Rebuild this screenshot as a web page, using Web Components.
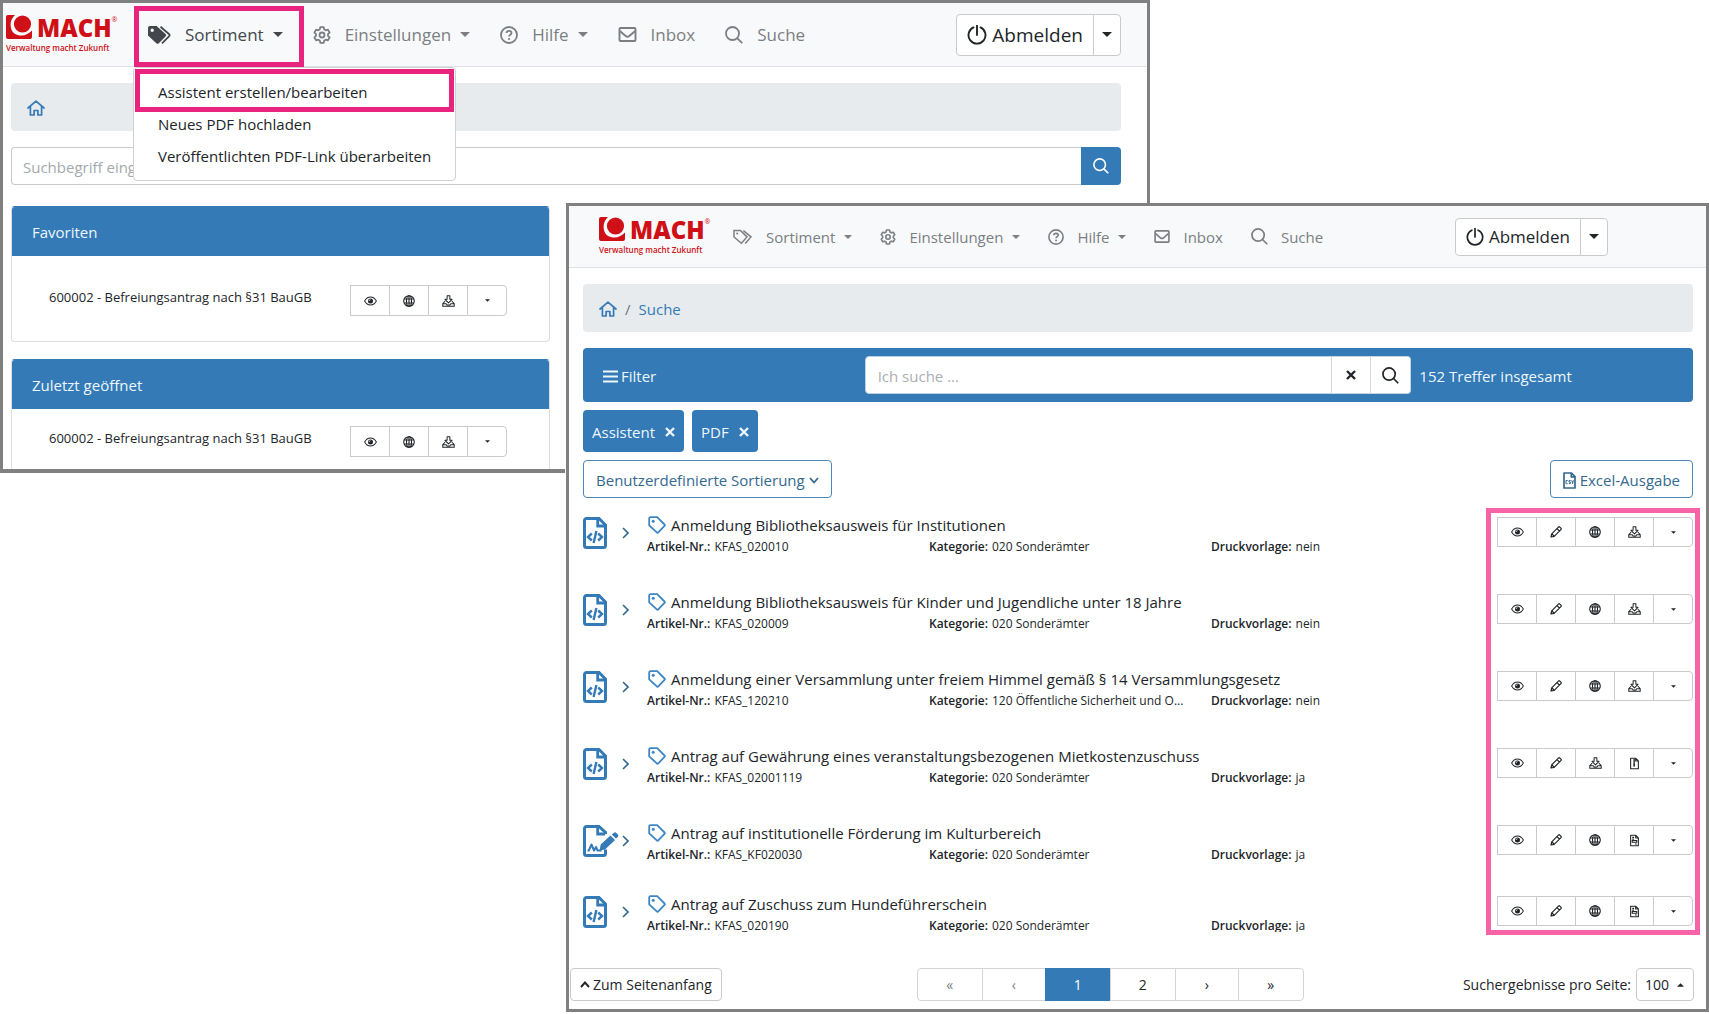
<!DOCTYPE html>
<html lang="de">
<head>
<meta charset="utf-8">
<title>MACH Formularsortiment</title>
<style>
  body { margin: 0; background: #fff; color: #212529; font: 15px/24px "Open Sans", "Noto Sans", sans-serif; }
  mach-desktop { --blue: #337ab7; --line: #c8cacc; --pink: #e8247f; --rose: #f763a6; }
</style>
</head>
<body>
<mach-desktop></mach-desktop>

<script>
const ICONS = {
  tags: ['0 0 20 16', '<path d="M1 1.5h6.4l6.6 6.4-5.6 6.4L1 8z"/><path d="M10.4 1.6l7.6 6.3-5.8 6.6"/><circle cx="4.2" cy="4.6" r="1" fill="currentColor" stroke="none"/>', 1.5],
  tagsFill: ['0 0 23 18', '<path d="M0 2a2 2 0 0 1 2-2h6.6l8.9 8a1.6 1.6 0 0 1 0 2.400l-6.700 6.800a1.800 1.800 0 0 1-2.500 0L0 9.500zM4.200 2.600a1.700 1.700 0 1 0 0 3.400 1.700 1.700 0 0 0 0-3.400z" fill="currentColor" fill-rule="evenodd" stroke="none"/><path d="M12.500.8l8.700 7.500a1.200 1.200 0 0 1 0 1.800L14 17.300"/>', 1.8],
  tag: ['0 0 18 18', '<path d="M1.200 2.400A1.200 1.200 0 0 1 2.400 1.200h6.800l7.300 7.300a1 1 0 0 1 0 1.400l-6.200 6.500a1 1 0 0 1-1.500 0L1.200 9.400z"/><circle cx="5.200" cy="5.200" r="1.500" fill="currentColor" stroke="none"/>', 1.8],
  gear: ['0 0 18 18', '<path d="M7.300 1.200h3.400l.5 2.200 1.600.9 2.100-.7 1.700 2.900-1.600 1.600v1.800l1.600 1.600-1.700 2.900-2.100-.7-1.600.9-.5 2.200H7.300l-.5-2.200-1.600-.9-2.100.7-1.700-2.900L3 9.900V8.100L1.400 6.500l1.700-2.900 2.100.7 1.600-.9z" stroke-linejoin="round"/><circle cx="9" cy="9" r="2.500"/>', 1.8],
  help: ['0 0 18 18', '<circle cx="9" cy="9" r="8"/><path d="M6.600 7.100c0-1.400 1-2.200 2.400-2.200s2.500.8 2.500 2.100c0 1.700-2.400 1.600-2.400 3.400"/><circle cx="9.100" cy="13" r="1.100" fill="currentColor" stroke="none"/>', 1.8],
  mail: ['0 0 18 15', '<rect x="1" y="1" width="16" height="13" rx="1"/><path d="M1.300 4l5.900 5a2.800 2.800 0 0 0 3.600 0l5.900-5"/>', 1.9],
  search: ['0 0 18 18', '<circle cx="7.500" cy="7.500" r="6.500"/><path d="M12.200 12.200l5 5"/>', 1.8],
  power: ['0 0 20 20', '<path d="M6.500 2.400a8.500 8.500 0 1 0 7 0M10 .5v9.500" stroke-linecap="round"/>', 1.9],
  home: ['0 0 18 16', '<path d="M1 8l8-6.800L17 8M3.400 6.500V15h3.700v-4.500h3.800V15h3.700V6.500" stroke-linejoin="round" stroke-linecap="round"/>', 1.7],
  caret: ['0 0 10 5', '<path d="M0 0h10L5 5z" fill="currentColor" stroke="none"/>', 0],
  caretUp: ['0 0 10 5', '<path d="M0 5h10L5 0z" fill="currentColor" stroke="none"/>', 0],
  down: ['0 0 10 7', '<path d="M1 1l4 4.500L9 1"/>', 1.8],
  up: ['0 0 10 7', '<path d="M1 6l4-4.500L9 6"/>', 1.9],
  right: ['0 0 7 12', '<path d="M1 1l5 5-5 5"/>', 1.6],
  menu: ['0 0 15 13', '<path d="M0 1.500h15M0 6.500h15M0 11.500h15"/>', 2],
  close: ['0 0 10 10', '<path d="M1 1l8 8M9 1L1 9"/>', 2.400],
  eye: ['0 0 14 10', '<path d="M.7 5C2.300 2 4.500.7 7 .7S11.700 2 13.300 5C11.700 8 9.500 9.300 7 9.300S2.300 8 .7 5z"/><circle cx="7" cy="5" r="2.700" fill="currentColor" stroke="none"/><path d="M5.500 5A1.500 1.500 0 0 1 7 3.500" stroke="#fff" stroke-width=".8"/>', 1.100],
  globe: ['0 0 12 12', '<circle cx="6" cy="6" r="5.300"/><ellipse cx="6" cy="6" rx="2.500" ry="5.300"/><path d="M6 .7v10.600M1.200 4h9.600M1.200 8h9.600"/>', 1.100],
  inbox: ['0 0 14 13', '<path d="M5.500.7h3v4h2.300L7 8.600 3.200 4.700h2.300z" stroke-linejoin="round"/><path d="M3.400 6.500L.8 9.500v2.800h12.400V9.500l-2.600-3M.8 9.500h3.700l1 1.300h3l1-1.300h3.700"/>', 1.100],
  pencil: ['0 0 12 12', '<path d="M1 11l.7-3.200L8.400 1.100a1 1 0 0 1 1.400 0l1.100 1.100a1 1 0 0 1 0 1.400L4.200 10.300zM7 2.600L9.400 5M2 8l2 2" stroke-linejoin="round"/>', 1.200],
  zip: ['0 0 10 13', '<path d="M.7.700h5.800l2.800 2.800v8.800H.7zM6.300.8v2.900h3" stroke-linejoin="round"/><path d="M4.600 1.500v8.500M3.600 8h2" stroke-width="1.500"/>', 1.200],
  invoice: ['0 0 10 13', '<path d="M.7.700h5.800l2.800 2.800v8.800H.7zM6.300.8v2.900h3" stroke-linejoin="round"/><path d="M2.500 3h2M2.500 5h2M2.500 6.500h5v2h-5zM5.500 10.300h2"/>', 1.200],
  csv: ['0 0 13 17', '<path d="M1 1h7.500L12 4.500V16H1zM8.300 1.200v3.600h3.500" stroke-linejoin="round"/><path d="M4.600 8.500H3v3.200h1.600M7.600 8.500H6v1.500h1.400v1.700H5.800M8.800 8.300l.8 3.300.8-3.300" stroke-width="1"/>', 1.700],
  code: ['0 0 24 32', '<path d="M1.500 3.500a2 2 0 0 1 2-2H16l6.500 6.500v20.500a2 2 0 0 1-2 2h-17a2 2 0 0 1-2-2z" stroke-width="3"/><path d="M14.700 2v7h7.500" stroke-width="2.800"/><path d="M8.800 16.500L5 20l3.800 3.500M15.200 16.500L19 20l-3.800 3.500M13.400 14l-2.800 12"/>', 2.400],
  sign: ['0 0 36 32', '<path d="M22.500 9v-1.500L16 1.500H3.500a2 2 0 0 0-2 2v25a2 2 0 0 0 2 2h17a2 2 0 0 0 2-2v-4" stroke-width="3"/><path d="M14.700 2v7h7.500" stroke-width="2.800"/><path d="M4.500 25.500h1.300l2.700-6 2.500 6 2-3.500 1.600 3.500h4" stroke-width="2" stroke-linejoin="round"/><path d="M16.500 25.500l1.200-6L27.500 10.500l4.500 4.500-10 9.500zM28.700 9.500l2-1.600a2 2 0 0 1 2.700 0l1.400 1.500a2 2 0 0 1 0 2.600l-1.900 1.600z" fill="currentColor" stroke="none"/>', 2]
};

class Shadow extends HTMLElement {
  connectedCallback() {
    if (this.shadowRoot) return;
    this.attachShadow({ mode: 'open' }).innerHTML =
      `<style>*{box-sizing:border-box}button,input,select{font:inherit;color:inherit;margin:0}button{cursor:pointer}a{color:inherit;text-decoration:none}${this.css()}</style>${this.html()}`;
  }
  css() { return ''; }
  html() { return '<slot></slot>'; }
  a(name) { return this.getAttribute(name) || ''; }
}
const def = (tag, cls) => customElements.define(tag, cls);
const icon = (name, w, h) => `<ui-icon name="${name}" w="${w}" h="${h}"></ui-icon>`;

def('ui-icon', class extends Shadow {
  css() { return `:host{display:inline-flex;flex:none;width:${this.a('w')}px;height:${this.a('h')}px}svg{display:block;width:100%;height:100%}`; }
  html() {
    const [box, body, stroke] = ICONS[this.a('name')];
    return `<svg viewBox="${box}" fill="none" stroke="currentColor" stroke-width="${stroke}" aria-hidden="true">${body}</svg>`;
  }
});

def('mach-logo', class extends Shadow {
  css() { return `
    :host{display:flex;flex-direction:column;flex:none;width:110px;color:#cf1016}
    .top{display:flex;align-items:flex-start;gap:5px;height:26px}
    svg{flex:none;width:26px;height:24px}
    b{font:800 24px/26px "Open Sans",sans-serif}
    sup{font:7px/10px "Open Sans",sans-serif}
    .word{display:flex}
    small{font:600 8px/13px "Open Sans",sans-serif;white-space:nowrap}`; }
  html() { return `
    <div class="top"><svg viewBox="0 0 26 24" aria-hidden="true"><path d="M0 2Q0 0 2 0h7C5 4 4 8 5 13c1 5 5 7 9 7.500 5 .5 9-2 12-5V22q0 2-2 2H2q-2 0-2-2z" fill="#cf1016"/><circle cx="16.500" cy="9" r="8.600" fill="#cf1016"/></svg>
    <span class="word"><b>MACH</b><sup>®</sup></span></div><small>Verwaltung macht Zukunft</small>`; }
});

def('nav-item', class extends Shadow {
  css() { return `:host{display:flex;position:relative}
    a{display:flex;align-items:center;white-space:nowrap;color:#7c7f82}
    :host([active]) a{color:#43474b}
    .label{margin-left:var(--nav-icon-gap)}
    .caret{margin-left:9px;display:flex}`; }
  html() {
    return `<a href="#">${icon(this.a('icon'), this.a('iw'), this.a('ih'))}<span class="label">${this.a('label')}</span>${this.hasAttribute('menu') ? `<span class="caret">${icon('caret', this.a('cw') || 8, this.a('cw') ? 5 : 4)}</span>` : ''}</a><slot></slot>`;
  }
});

def('drop-menu', class extends Shadow {
  css() { return `:host{display:block;position:absolute;z-index:5;left:-15px;top:44px;padding:8px 0;background:#fff;border:1px solid #cfd1d4;border-radius:4px;color:#212529;font-size:15px}
    a{display:block;padding:4px 24px;white-space:nowrap;line-height:24px}`; }
  html() { return `<a href="#">Assistent erstellen/bearbeiten</a><a href="#">Neues PDF hochladen</a><a href="#">Veröffentlichten PDF-Link überarbeiten</a><slot></slot>`; }
});

def('mark-frame', class extends Shadow {
  css() { return `:host{display:block;position:absolute;z-index:6;pointer-events:none;border:5px solid var(--pink)}`; }
});

def('logout-split', class extends Shadow {
  css() { return `:host{display:flex;margin-left:auto;color:#212529;height:var(--split-h);font-size:var(--split-font)}
    button{background:#fff;border:1px solid var(--line);display:flex;align-items:center;justify-content:center;padding:0 10px;gap:5px}
    .main{border-radius:4px 0 0 4px}.more{border-radius:0 4px 4px 0;margin-left:-1px;padding:0 8px}`; }
  html() { return `<button class="main">${icon('power', this.a('p'), this.a('p'))}Abmelden</button><button class="more" aria-label="Mehr">${icon('caret', 10, 5)}</button>`; }
});

def('nav-bar', class extends Shadow {
  css() { return `:host{display:flex;align-items:center;background:#f8f9fb;border-bottom:1px solid #dfe1e6}`; }
});

def('crumb-bar', class extends Shadow {
  css() { return `:host{display:block}nav{display:flex;align-items:center;gap:8px;height:48px;padding:2px 16px 0;border-radius:4px;background:#e8ebee;color:#6c757d}a{color:var(--blue);display:flex}`; }
  html() { return `<nav aria-label="Pfad"><a href="#" aria-label="Startseite">${icon('home', 18, 16)}</a>${this.a('page') ? `<span>/</span><a href="#">${this.a('page')}</a>` : ''}</nav>`; }
});

def('action-group', class extends Shadow {
  css() { return `:host{display:flex;height:var(--action-h,30px)}
    button{width:40px;padding:0;background:#fff;border:1px solid var(--line);display:flex;align-items:center;justify-content:center}
    button+button{margin-left:-1px}button:first-child{border-radius:4px 0 0 4px}button:last-child{border-radius:0 4px 4px 0}`; }
  html() {
    const size = { eye: [13, 10], pencil: [12, 12], globe: [12, 12], inbox: [13, 12], zip: [9, 13], invoice: [9, 13], caret: [5, 3] };
    const label = { eye: 'Ansehen', pencil: 'Bearbeiten', globe: 'Online', inbox: 'Herunterladen', zip: 'Archiv', invoice: 'Vorlage', caret: 'Mehr' };
    return this.a('icons').split(' ').map(n => `<button aria-label="${label[n]}">${icon(n, ...size[n])}</button>`).join('');
  }
});

def('link-card', class extends Shadow {
  css() { return `:host{display:block;width:calc(48.500% + 1px);border:1px solid #dcdddf;border-top-color:var(--blue);border-radius:4px;overflow:hidden}
    h2{margin:0;height:49px;line-height:50px;padding:0 20px;background:var(--blue);color:#eef6fb;font-size:15px;font-weight:400}
    .row{display:grid;grid-template-columns:301px auto;justify-content:start;padding:var(--card-pad) 37px 25px;font-size:13px}
    action-group{--action-h:31px}`; }
  html() { return `<h2>${this.a('title-text')}</h2><div class="row"><span>600002 - Befreiungsantrag nach §31 BauGB</span><action-group icons="eye globe inbox caret"></action-group></div>`; }
});

def('start-window', class extends Shadow {
  css() { return `
    :host{display:block;position:absolute;left:0;top:0;width:67.290%;height:473px;overflow:hidden;background:#fff;border:3px solid #808080;border-bottom-width:4px}
    nav-bar{height:64px;padding:0 26px 0 3px;gap:30px;font-size:17px;--nav-icon-gap:14px;--split-h:42px;--split-font:19px}
    mach-logo{margin-right:2px}
    main{padding:16px 26px 0 8px}
    form{display:flex;height:38px;margin:16px 0 21px}
    input{flex:1;min-width:0;border:1px solid var(--line);border-right:0;border-radius:4px 0 0 4px;padding:1px 11px 0;background:#fff}
    input::placeholder{color:#a4a9ae;opacity:1}
    form button{width:40px;border:0;border-radius:0 4px 4px 0;background:var(--blue);color:#fff;display:flex;align-items:center;justify-content:center;padding:0}
    link-card+link-card{margin-top:17px}
    .f1{left:-14px;right:-21px;top:-17px;bottom:-20px}
    .f2{left:1px;right:1px;top:1px;height:43px}`; }
  html() { return `
    <nav-bar><mach-logo></mach-logo>
      <nav-item active menu icon="tagsFill" iw="23" ih="18" cw="10" label="Sortiment"><mark-frame class="f1"></mark-frame>
        <drop-menu><mark-frame class="f2"></mark-frame></drop-menu></nav-item>
      <nav-item menu icon="gear" iw="18" ih="18" cw="10" label="Einstellungen"></nav-item>
      <nav-item menu icon="help" iw="18" ih="18" cw="10" label="Hilfe"></nav-item>
      <nav-item icon="mail" iw="19" ih="15" label="Inbox"></nav-item>
      <nav-item icon="search" iw="18" ih="18" label="Suche"></nav-item>
      <logout-split p="20"></logout-split></nav-bar>
    <main><crumb-bar></crumb-bar>
      <form><input aria-label="Suchbegriff" placeholder="Suchbegriff eingeben"><button type="button" aria-label="Suchen">${icon('search', 16, 16)}</button></form>
      <link-card title-text="Favoriten" style="--card-pad:29px"></link-card>
      <link-card title-text="Zuletzt geöffnet" style="--card-pad:17px"></link-card></main>`; }
});

def('filter-bar', class extends Shadow {
  css() { return `:host{display:grid;grid-template-columns:51fr 99fr 51fr;align-items:center;height:54px;border-radius:4px;background:var(--blue);color:#eef6fb}
    .f{justify-self:start;display:flex;align-items:center;gap:3px;background:none;border:0;padding:2px 20px 0}
    form{display:flex;height:38px;color:#212529}
    input{flex:1;min-width:0;border:1px solid #b9cfe2;border-radius:4px 0 0 4px;padding:2px 12px 0;background:#fff}
    input::placeholder{color:#a9aeb2;opacity:1}
    form button{width:40px;background:#fff;border:1px solid #c5d3df;border-left-color:#d5d8da;margin-left:-1px;padding:0;display:flex;align-items:center;justify-content:center}
    form button:last-child{width:41px;border-radius:0 4px 4px 0}
    .n{padding:2px 0 0 8px;white-space:nowrap}`; }
  html() { return `<button class="f">${icon('menu', 15, 13)}Filter</button><form><input aria-label="Ich suche" placeholder="Ich suche ..."><button type="button" aria-label="Leeren">${icon('close', 10, 10)}</button><button type="button" aria-label="Suchen">${icon('search', 17, 17)}</button></form><span class="n">152 Treffer insgesamt</span>`; }
});

def('filter-chip', class extends Shadow {
  css() { return `:host{display:inline-flex}button{display:flex;align-items:center;gap:10px;height:42px;padding:2px 9px 0;border:0;border-radius:4px;background:var(--blue);color:#eef6fb}`; }
  html() { return `<button><slot></slot>${icon('close', 10, 10)}</button>`; }
});

def('outline-button', class extends Shadow {
  css() { return `:host{display:inline-flex}button{display:flex;align-items:center;gap:4px;height:38px;padding:2px 12px 0;border:1px solid #4a86b8;border-radius:4px;background:#fff;color:#34698f}`; }
  html() { return `<button><slot></slot></button>`; }
});

def('result-row', class extends Shadow {
  css() { return `:host{display:grid;grid-template-columns:39px 25px 1fr auto;align-items:start}
    .ic{color:var(--blue);display:flex}.go{color:#34698f;display:flex;padding:10px 0 0;border:0;background:none;justify-self:start}
    h3{margin:-4px 0 0;font-size:15px;font-weight:400;line-height:24px;display:flex;align-items:center;gap:5px;white-space:nowrap}
    h3 ui-icon{color:#3f86c4;margin-left:1px}
    dl{display:grid;grid-template-columns:repeat(3,1fr);margin:0;padding-right:4px;font-size:12px;line-height:20px}
    dl div{display:flex;gap:4px;white-space:nowrap;min-width:0}dt{font-weight:600}dd{margin:0}`; }
  html() {
    const sign = this.a('kind') === 'sign';
    return `<span class="ic">${sign ? icon('sign', 36, 32) : icon('code', 24, 32)}</span>
      <button class="go" aria-label="Aufklappen">${icon('right', 7, 12)}</button>
      <div><h3>${icon('tag', 18, 18)}<span>${this.a('name')}</span></h3>
      <dl><div><dt>Artikel-Nr.:</dt><dd>${this.a('nr')}</dd></div><div><dt>Kategorie:</dt><dd>${this.a('cat') || '020 Sonderämter'}</dd></div><div><dt>Druckvorlage:</dt><dd>${this.a('print')}</dd></div></dl></div>
      <action-group icons="${this.a('icons')}"></action-group>`;
  }
});

def('result-list', class extends Shadow {
  css() { return `:host{display:block;position:relative;margin-top:15px}
    .clip{display:grid;grid-template-rows:repeat(4,77px) 71px 36px;padding-top:4px;overflow:hidden}
    mark-frame{--pink:var(--rose);width:214px;right:-7px;top:-5px;bottom:-3px}`; }
  html() {
    const rows = [
      ['Anmeldung Bibliotheksausweis für Institutionen', 'KFAS_020010', '', 'nein', 'eye pencil globe inbox caret'],
      ['Anmeldung Bibliotheksausweis für Kinder und Jugendliche unter 18 Jahre', 'KFAS_020009', '', 'nein', 'eye pencil globe inbox caret'],
      ['Anmeldung einer Versammlung unter freiem Himmel gemäß § 14 Versammlungsgesetz', 'KFAS_120210', '120 Öffentliche Sicherheit und O...', 'nein', 'eye pencil globe inbox caret'],
      ['Antrag auf Gewährung eines veranstaltungsbezogenen Mietkostenzuschuss', 'KFAS_02001119', '', 'ja', 'eye pencil inbox zip caret'],
      ['Antrag auf institutionelle Förderung im Kulturbereich', 'KFAS_KF020030', '', 'ja', 'eye pencil globe invoice caret', 'sign'],
      ['Antrag auf Zuschuss zum Hundeführerschein', 'KFAS_020190', '', 'ja', 'eye pencil globe invoice caret']
    ];
    return `<div class="clip">${rows.map(r => `<result-row name="${r[0]}" nr="${r[1]}" cat="${r[2]}" print="${r[3]}" icons="${r[4]}" kind="${r[5] || ''}"></result-row>`).join('')}</div><mark-frame></mark-frame>`;
  }
});

def('page-footer', class extends Shadow {
  css() { return `:host{display:grid;grid-template-columns:8fr auto 9fr;align-items:center;padding:36px 12px 8px 1px;font-size:14px;line-height:20px}
    .top{justify-self:start;display:flex;align-items:center;gap:3px;height:33px;padding:0 9px;background:#fff;border:1px solid var(--line);border-radius:4px}
    nav{display:flex}
    nav button{width:66px;height:33px;padding:0;background:#fff;border:1px solid #d3d5d8;margin-left:-1px}
    nav button:first-child{border-radius:4px 0 0 4px;margin-left:0}nav button:last-child{border-radius:0 4px 4px 0}
    nav .step{width:64px}
    nav .off{color:#7c7f82}nav .on{background:var(--blue);border-color:var(--blue);color:#fff}
    .per{justify-self:end;display:flex;align-items:center;gap:5px}
    .sel{display:grid;align-items:center}
    select,.sel ui-icon{grid-area:1/1}
    .sel ui-icon{justify-self:end;margin-right:10px;pointer-events:none}
    select{appearance:none;width:58px;height:33px;padding:0 8px;background:#fff;border:1px solid var(--line);border-radius:4px}`; }
  html() { return `<button class="top">${icon('up', 10, 7)}Zum Seitenanfang</button>
    <nav aria-label="Seiten"><button class="off">«</button><button class="off step">‹</button><button class="on">1</button><button>2</button><button class="step">›</button><button>»</button></nav>
    <div class="per"><label for="n">Suchergebnisse pro Seite:</label><span class="sel"><select id="n"><option>100</option></select>${icon('caretUp', 7, 4)}</span></div>`; }
});

def('search-window', class extends Shadow {
  css() { return `
    :host{display:block;position:absolute;left:33.120%;right:0;top:203px;background:#fff;border:3px solid #808080;box-shadow:-1px 0 #fff}
    nav-bar{height:62px;padding:0 98px 0 30px;gap:28px;--nav-icon-gap:13px;--split-h:38px;--split-font:17px}
    mach-logo{margin-right:-4px}
    main{padding:16px 13px 0 14px}
    filter-bar{margin-top:16px}
    .chips{display:flex;gap:8px;margin:8px 0}
    .tools{display:flex;justify-content:space-between}`; }
  html() { return `
    <nav-bar><mach-logo></mach-logo>
      <nav-item menu icon="tags" iw="20" ih="16" label="Sortiment"></nav-item>
      <nav-item menu icon="gear" iw="16" ih="16" label="Einstellungen"></nav-item>
      <nav-item menu icon="help" iw="16" ih="16" label="Hilfe"></nav-item>
      <nav-item icon="mail" iw="16" ih="13" label="Inbox"></nav-item>
      <nav-item icon="search" iw="17" ih="17" label="Suche"></nav-item>
      <logout-split p="18"></logout-split></nav-bar>
    <main><crumb-bar page="Suche"></crumb-bar><filter-bar></filter-bar>
      <div class="chips"><filter-chip>Assistent</filter-chip><filter-chip>PDF</filter-chip></div>
      <div class="tools"><outline-button>Benutzerdefinierte Sortierung${icon('down', 10, 7)}</outline-button><outline-button>${icon('csv', 13, 17)}Excel-Ausgabe</outline-button></div>
      <result-list></result-list></main>
    <page-footer></page-footer>`; }
});

def('mach-desktop', class extends Shadow {
  css() { return `:host{display:block;position:relative;min-height:1014px;overflow:hidden}`; }
  html() { return `<start-window></start-window><search-window></search-window>`; }
});
</script>
</body>
</html>
